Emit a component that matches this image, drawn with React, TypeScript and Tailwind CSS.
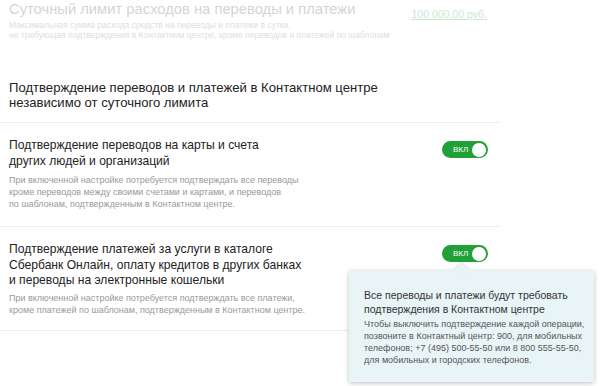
const items = [
  {
    title: ["Подтверждение переводов на карты и счета", "других людей и организаций"],
    text: [
      "При включенной настройке потребуется подтверждать все переводы",
      "кроме переводов между своими счетами и картами, и переводов",
      "по шаблонам, подтвержденным в Контактном центре.",
    ],
    gap: "mt-[5px]",
  },
  {
    title: [
      "Подтверждение платежей за услуги в каталоге",
      "Сбербанк Онлайн, оплату кредитов в других банках",
      "и переводы на электронные кошельки",
    ],
    text: [
      "При включенной настройке потребуется подтверждать все платежи,",
      "кроме платежей по шаблонам, подтвержденным в Контактном центре.",
    ],
    gap: "mt-[3px]",
  },
];

function Toggle() {
  return (
    <div className="flex h-[17px] w-[46px] items-center justify-between rounded-full bg-[#21a038] pl-[11px] pr-[1px]">
      <span className="text-[8px] leading-none text-white">ВКЛ</span>
      <span className="h-[16px] w-[16px] rounded-full border border-[#21a038] bg-white" />
    </div>
  );
}

export default function App() {
  return (
    <div className="relative h-[386px] w-[600px] overflow-hidden bg-white font-['Liberation_Sans',Arial,sans-serif]">
      <div className="w-[500px]">
        <div className="flex h-[40px] justify-between pl-[9px] pr-[13px] pt-[1px] opacity-25">
          <div>
            <p className="whitespace-nowrap text-[14.75px] leading-[17px] text-[#555]">
              Суточный лимит расходов на переводы и платежи
            </p>
            <p className="mt-[2px] whitespace-nowrap text-[8.5px] leading-[10px] text-[#777]">
              Максимальная сумма расхода средств на переводы и платежи в сутки,
              <br />
              не требующая подтверждения в Контактном центре, кроме переводов и платежей по шаблонам
            </p>
          </div>
          <span className="mt-[6px] text-[10.5px] leading-[14px] text-[#21a038] underline">
            100 000,00 руб.
          </span>
        </div>

        <h2 className="whitespace-nowrap pb-[12px] pl-[9px] pt-[40px] text-[13.1px] leading-[15px] text-[#222]">
          Подтверждение переводов и платежей в Контактном центре
          <br />
          независимо от суточного лимита
        </h2>

        {items.map((item, i) => (
          <div key={i} className="flex h-[104px] justify-between border-t border-[#ececec] pl-[9px] pr-[12px] pt-[15px]">
            <div className="whitespace-nowrap">
              <p className="text-[12.1px] leading-[15.5px] text-[#222]">
                {item.title.map((l) => (
                  <span key={l} className="block">{l}</span>
                ))}
              </p>
              <p className={`${item.gap} text-[9px] leading-[12px] text-[#999]`}>
                {item.text.map((l) => (
                  <span key={l} className="block">{l}</span>
                ))}
              </p>
            </div>
            <div className="pt-[3px]">
              <Toggle />
            </div>
          </div>
        ))}
        <div className="border-t border-[#ececec]" />
      </div>

      <div className="absolute left-[349px] top-[271px] h-[111px] w-[245px] bg-[#e9f4f7] pl-[15px] pt-[17px] shadow-[0_1px_5px_rgba(0,0,0,0.25)]">
        <div className="absolute -top-[6px] left-[107px] h-[11px] w-[11px] rotate-45 bg-[#e9f4f7] shadow-[-1px_-1px_2px_rgba(0,0,0,0.1)]" />
        <p className="relative whitespace-nowrap text-[10.5px] leading-[14px] text-[#333]">
          Все переводы и платежи будут требовать
          <br />
          подтверждения в Контактном центре
        </p>
        <p className="mt-[2px] whitespace-nowrap text-[9px] leading-[12px] text-[#555]">
          Чтобы выключить подтверждение каждой операции,
          <br />
          позвоните в Контактный центр: 900, для мобильных
          <br />
          телефонов; +7 (495) 500-55-50 или 8 800 555-55-50,
          <br />
          для мобильных и городских телефонов.
        </p>
      </div>
    </div>
  );
}
